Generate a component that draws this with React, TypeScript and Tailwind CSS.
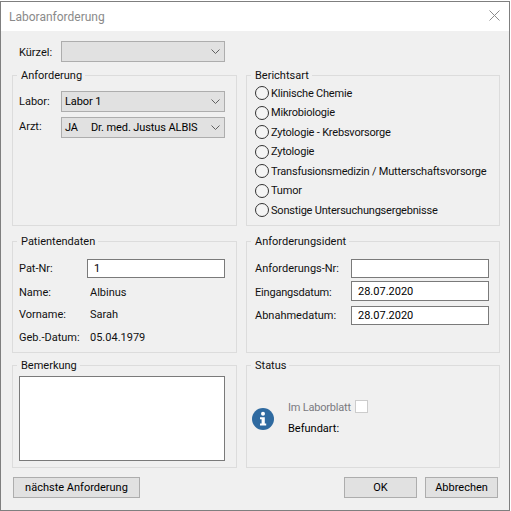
import React from 'react';

const font = "font-['Roboto',sans-serif]";

const Combo: React.FC<{ children?: React.ReactNode }> = ({ children }) => (
  <div className="w-[164px] h-[21px] flex items-center justify-between pl-[3px] pr-[4px] bg-[#e1e1e1] border border-[#adadad] text-black">
    <div className="flex-1 pt-px whitespace-nowrap tracking-[-0.1px]">{children}</div>
    <svg width="9" height="5" viewBox="0 0 9 5" className="shrink-0">
      <path d="M0.5 0.5 L4.5 4.5 L8.5 0.5" fill="none" stroke="#606060" strokeWidth="1" />
    </svg>
  </div>
);

const Group: React.FC<{ title: string; className: string; children?: React.ReactNode }> = ({ title, className, children }) => (
  <fieldset className={`border border-[#dcdcdc] min-w-0 ${className}`}>
    <legend className="ml-[4px] pl-[4px] pr-[3px] h-[14px] leading-[16px]">{title}</legend>
    {children}
  </fieldset>
);

const Input: React.FC<{ value?: string; className?: string }> = ({ value, className }) => (
  <div className={`w-[138px] flex items-center pl-[6px] pt-px bg-white border border-[#7a7a7a] text-black ${className ?? ''}`}>{value}</div>
);

const Radio: React.FC<{ label: string }> = ({ label }) => (
  <div className="h-[19.5px] flex items-center gap-[2px] whitespace-nowrap">
    <div className="w-[14px] h-[14px] rounded-full border border-[#333] bg-[#f4f4f4] shrink-0" />
    <span className="pt-px tracking-[-0.2px]">{label}</span>
  </div>
);

const Button: React.FC<{ className: string; children: React.ReactNode }> = ({ className, children }) => (
  <button className={`h-[21px] flex items-center justify-center pt-px bg-[#e1e1e1] border border-[#adadad] text-black ${className}`}>
    {children}
  </button>
);

const radios = [
  'Klinische Chemie',
  'Mikrobiologie',
  'Zytologie - Krebsvorsorge',
  'Zytologie',
  'Transfusionsmedizin / Mutterschaftsvorsorge',
  'Tumor',
  'Sonstige Untersuchungsergebnisse',
];

export default function App() {
  return (
    <div className={`w-[511px] h-[511px] pt-px bg-white overflow-hidden text-[11px] leading-[16px] text-[#111] ${font}`}>
      <div className="w-[510px] h-[510px] border border-[#7f7f7f] flex flex-col">
        <div className="h-[29px] shrink-0 bg-white flex items-center justify-between pl-[8px] pr-[9px]">
          <span className="text-[12px] text-[#8a8a8a]">Laboranforderung</span>
          <svg width="11" height="11" viewBox="0 0 11 11" className="mb-[3px]">
            <path d="M0.5 0.5 L10.5 10.5 M10.5 0.5 L0.5 10.5" stroke="#8c8c8c" strokeWidth="1" />
          </svg>
        </div>

        <div className="flex-1 bg-[#f0f0f0] pt-[10px] pl-[11px]">
          <div className="h-[21px] flex items-center">
            <span className="w-[49px] pl-[7px] pt-[2px]">Kürzel:</span>
            <Combo />
          </div>

          <div className="grid grid-cols-[225px_254px] gap-x-[9px] mt-[6px]">
            <Group title="Anforderung" className="h-[158px]">
              <div className="pt-[9px] pl-[6px] flex flex-col gap-[5px]">
                <div className="flex items-center">
                  <span className="w-[42px]">Labor:</span>
                  <Combo>Labor 1</Combo>
                </div>
                <div className="flex items-center">
                  <span className="w-[42px] pb-px">Arzt:</span>
                  <Combo>
                    <span className="inline-block w-[26px]">JA</span>Dr. med. Justus ALBIS
                  </Combo>
                </div>
              </div>
            </Group>

            <Group title="Berichtsart" className="h-[158px]">
              <div className="pt-[1.5px] pl-[8px]">
                {radios.map(r => (
                  <Radio key={r} label={r} />
                ))}
              </div>
            </Group>

            <Group title="Patientendaten" className="h-[119px] mt-[8px]">
              <div className="pt-[11px] pl-[6px]">
                <div className="flex items-center">
                  <span className="w-[68px] pt-px">Pat-Nr:</span>
                  <Input value="1" className="h-[19px]" />
                </div>
                <div className="flex items-center mt-[5px] h-[18px] pt-px">
                  <span className="w-[71px] whitespace-nowrap">Name:</span>
                  <span>Albinus</span>
                </div>
                <div className="flex items-center mt-[4px] h-[18px] pt-px">
                  <span className="w-[71px] whitespace-nowrap">Vorname:</span>
                  <span>Sarah</span>
                </div>
                <div className="flex items-center mt-[5px] h-[18px] pt-px">
                  <span className="w-[71px] whitespace-nowrap">Geb.-Datum:</span>
                  <span>05.04.1979</span>
                </div>
              </div>
            </Group>

            <Group title="Anforderungsident" className="h-[119px] mt-[8px]">
              <div className="pt-[11px] pl-[8px] flex flex-col gap-[3px]">
                <div className="flex items-center">
                  <span className="w-[96px] pt-px whitespace-nowrap">Anforderungs-Nr:</span>
                  <Input className="h-[19px]" />
                </div>
                <div className="flex items-center">
                  <span className="w-[96px] pt-[3px] whitespace-nowrap tracking-[-0.2px]">Eingangsdatum:</span>
                  <Input value="28.07.2020" className="h-[20px]" />
                </div>
                <div className="flex items-center mt-[2px]">
                  <span className="w-[96px] pt-px whitespace-nowrap">Abnahmedatum:</span>
                  <Input value="28.07.2020" className="h-[19px]" />
                </div>
              </div>
            </Group>

            <Group title="Bemerkung" className="h-[110px] mt-[5px]">
              <div className="pt-[4px] pl-[6px]">
                <div className="w-[206px] h-[85px] bg-white border border-[#7a7a7a]" />
              </div>
            </Group>

            <Group title="Status" className="h-[110px] mt-[5px]">
              <div className="pt-[28px] pl-[5px] flex items-center gap-[14px]">
                <svg width="22" height="22" viewBox="0 0 22 22" className="shrink-0">
                  <circle cx="11" cy="11" r="11" fill="#2f6aa0" />
                  <circle cx="11" cy="5.8" r="2" fill="#fff" />
                  <path d="M8 9.2 H12.8 V15.5 H14.2 V17.6 H8 V15.5 H9.6 V11.2 H8 Z" fill="#fff" />
                </svg>
                <div>
                  <div className="flex items-center h-[13px]">
                    <span className="w-[67px] pt-[2px] whitespace-nowrap tracking-[-0.2px] text-[#7a7a80]">Im Laborblatt</span>
                    <div className="w-[13px] h-[13px] bg-white border border-[#cccccc]" />
                  </div>
                  <div className="h-[16px] mt-[8px] text-black">Befundart:</div>
                </div>
              </div>
            </Group>
          </div>

          <div className="flex mt-[9px] pl-px">
            <Button className="w-[127px]">nächste Anforderung</Button>
            <Button className="w-[73px] ml-[204px]">OK</Button>
            <Button className="w-[73px] ml-[8px]">Abbrechen</Button>
          </div>
        </div>
      </div>
    </div>
  );
}
